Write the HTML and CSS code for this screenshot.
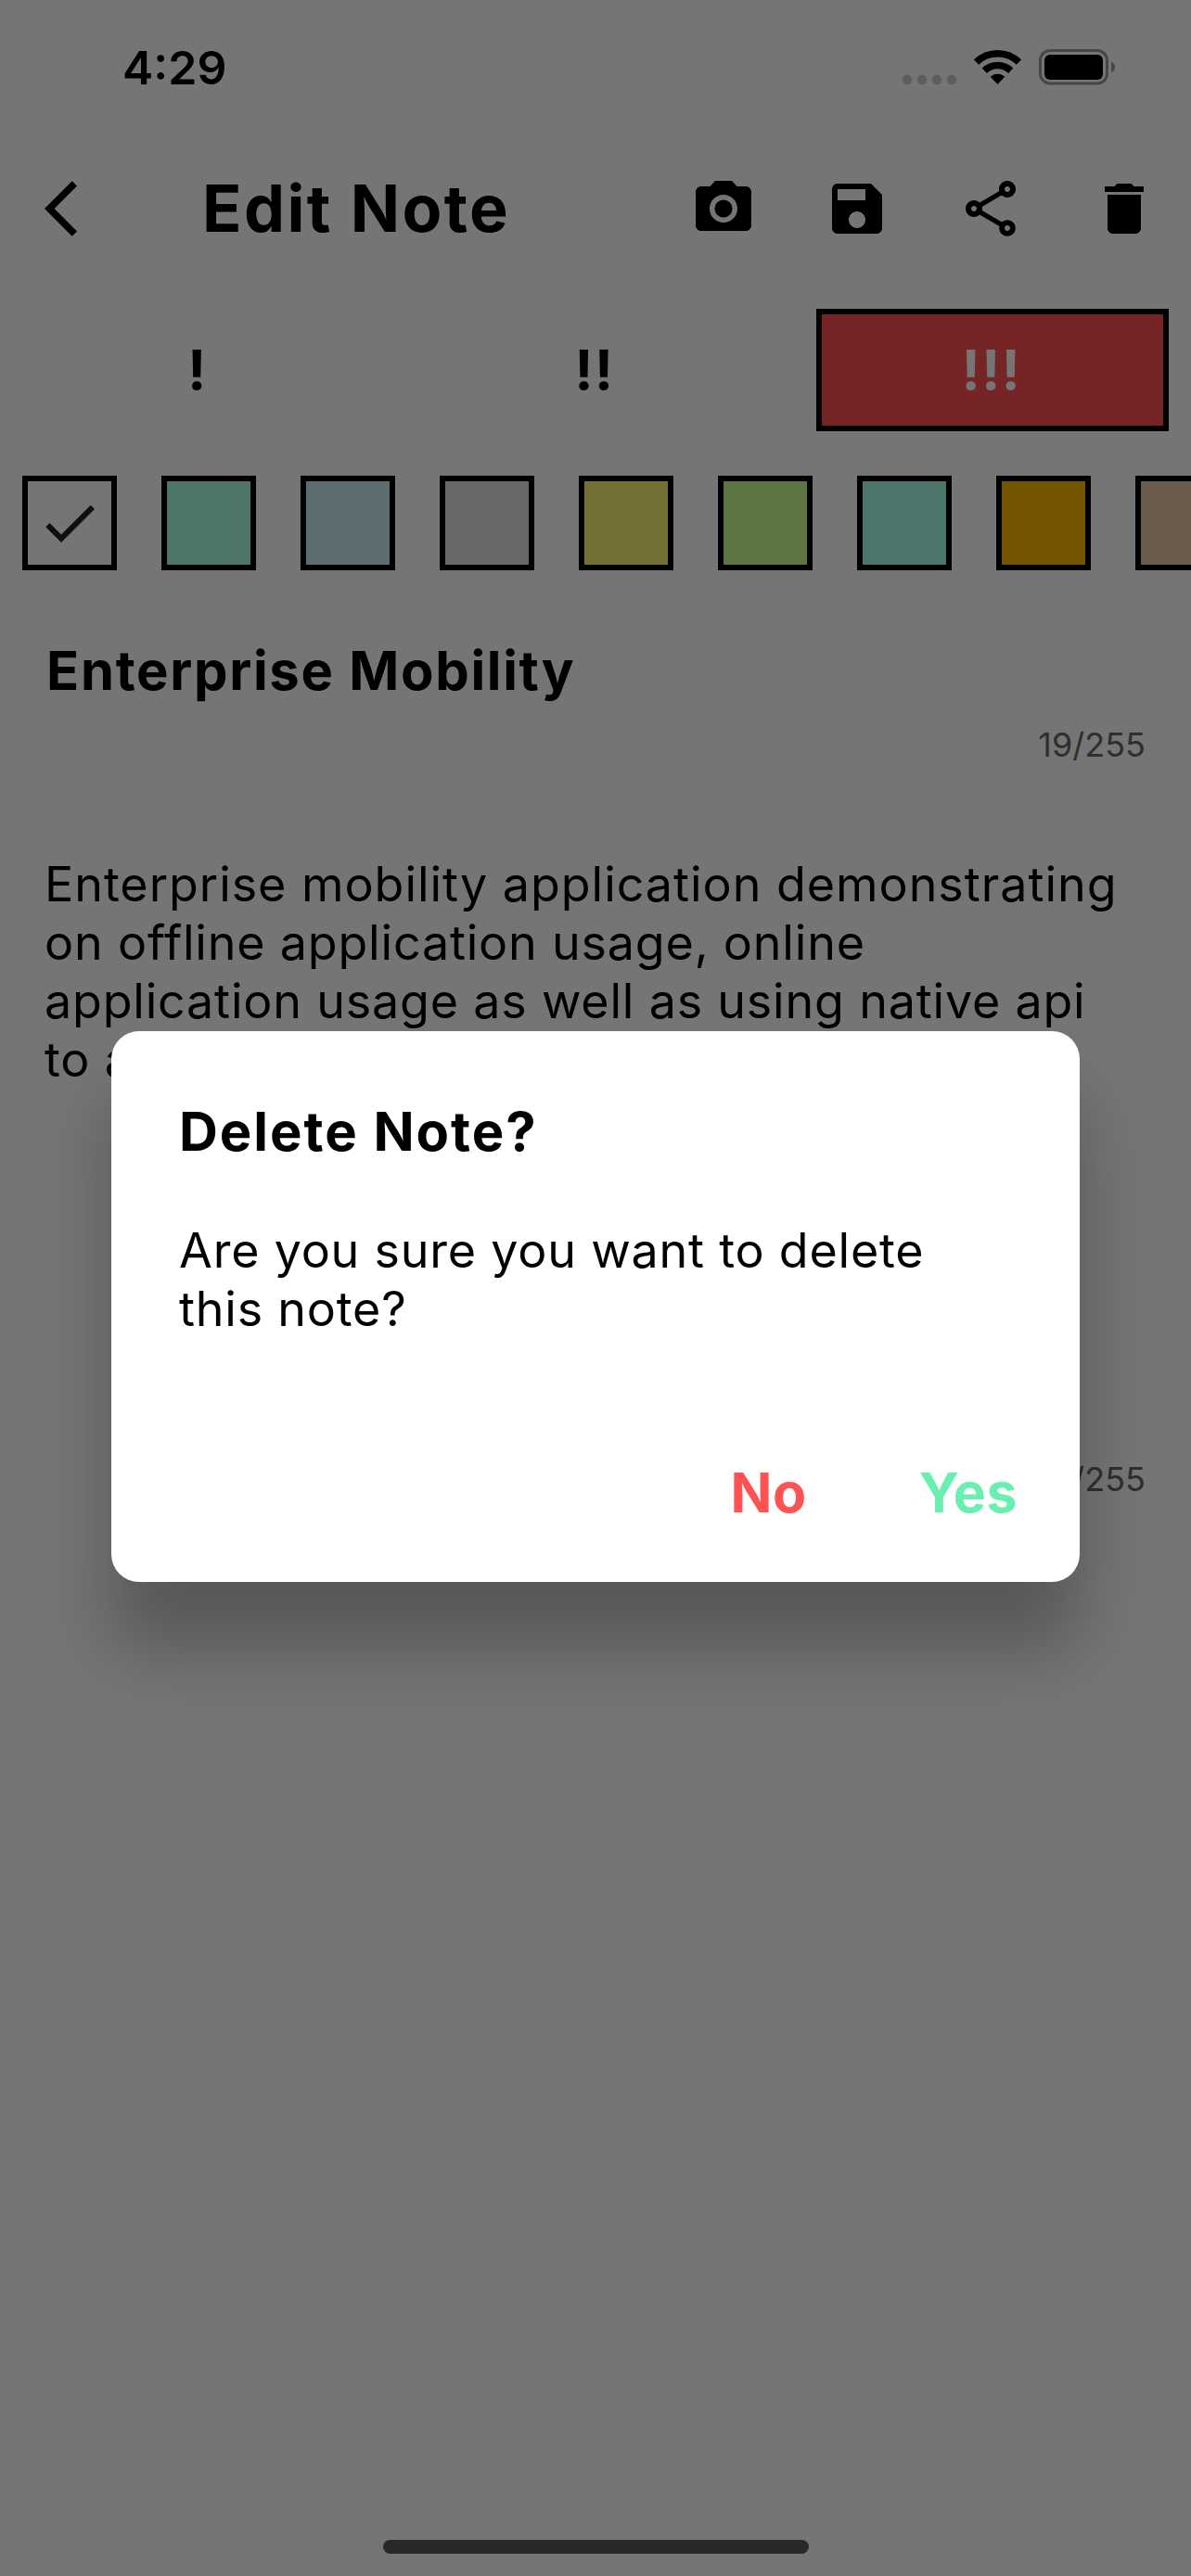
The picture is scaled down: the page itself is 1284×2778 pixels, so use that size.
FILE: index.html
```html
<!DOCTYPE html>
<html lang="en">
<head>
<meta charset="utf-8">
<title>Edit Note</title>
<link rel="stylesheet" href="styles.css">
</head>
<body>
<div class="screen">
  <header class="status">
    <span class="time">4:29</span>
    <svg class="indicators" width="228" height="48" viewBox="0 0 228 48" aria-hidden="true">
      <g fill="#ccc"><circle cx="8" cy="38" r="5.2"/><circle cx="24" cy="38" r="5.2"/><circle cx="40" cy="38" r="5.2"/><circle cx="56" cy="38" r="5.2"/></g>
      <g fill="none" stroke="#000" stroke-width="7.5">
        <path d="M82.5 19A33.2 33.2 0 0 1 128.5 19"/>
        <path d="M91.3 28.2A20.5 20.5 0 0 1 119.7 28.2"/>
      </g>
      <path d="M97.7 34.8A11.3 11.3 0 0 1 113.3 34.8L105.5 43z"/>
      <rect x="151.5" y="6.5" width="72" height="35.5" rx="10.5" fill="none" stroke="#9b9b9b" stroke-width="3"/>
      <rect x="156" y="11" width="63" height="27" rx="6"/>
      <path d="M228 18.5C230.8 19.8 232 22 232 24.4S230.8 29 228 30.3z" fill="#9b9b9b"/>
    </svg>
  </header>

  <nav class="appbar">
    <svg class="icon" viewBox="0 0 24 24"><path d="M11.67 3.87L9.9 2.1 0 12l9.9 9.9 1.77-1.77L3.54 12z"/></svg>
    <h1 class="heading">Edit Note</h1>
    <div class="tools">
      <svg class="icon" viewBox="0 0 24 24"><circle cx="12" cy="12" r="3.2"/><path d="M9 2L7.17 4H4c-1.1 0-2 .9-2 2v12c0 1.1.9 2 2 2h16c1.1 0 2-.9 2-2V6c0-1.1-.9-2-2-2h-3.17L15 2H9zm3 15c-2.76 0-5-2.24-5-5s2.24-5 5-5 5 2.24 5 5-2.24 5-5 5z"/></svg>
      <svg class="icon" viewBox="0 0 24 24"><path d="M17 3H5c-1.11 0-2 .9-2 2v14c0 1.1.89 2 2 2h14c1.1 0 2-.9 2-2V7l-4-4zm-5 16c-1.66 0-3-1.34-3-3s1.34-3 3-3 3 1.34 3 3-1.34 3-3 3zm3-10H5V5h10v4z"/></svg>
      <svg class="icon" viewBox="0 0 24 24"><path d="M18 16.08c-.76 0-1.44.3-1.96.77L8.91 12.7c.05-.23.09-.46.09-.7s-.04-.47-.09-.7l7.05-4.11c.54.5 1.25.81 2.04.81 1.66 0 3-1.34 3-3s-1.34-3-3-3-3 1.34-3 3c0 .24.04.47.09.7L8.04 9.81C7.5 9.31 6.79 9 6 9c-1.66 0-3 1.34-3 3s1.34 3 3 3c.79 0 1.5-.31 2.04-.81l7.12 4.16c-.05.21-.08.43-.08.65 0 1.61 1.31 2.92 2.92 2.92s2.92-1.31 2.92-2.92c0-1.61-1.31-2.92-2.92-2.92zM18 4c.55 0 1 .45 1 1s-.45 1-1 1-1-.45-1-1 .45-1 1-1zM6 13c-.55 0-1-.45-1-1s.45-1 1-1 1 .45 1 1-.45 1-1 1zm12 7.02c-.55 0-1-.45-1-1s.45-1 1-1 1 .45 1 1-.45 1-1 1z"/></svg>
      <svg class="icon" viewBox="0 0 24 24"><path d="M6 19c0 1.1.9 2 2 2h8c1.1 0 2-.9 2-2V7H6v12zM19 4h-3.5l-1-1h-5l-1 1H5v2h14V4z"/></svg>
    </div>
  </nav>

  <div class="priorities">
    <div class="priority">!</div>
    <div class="priority">!!</div>
    <div class="priority priority-high">!!!</div>
  </div>

  <div class="swatches">
    <div class="swatch white"><svg class="icon check" viewBox="0 0 24 24"><path d="M9 16.17L4.83 12l-1.42 1.41L9 19 21 7l-1.41-1.41z"/></svg></div>
    <div class="swatch mint"></div>
    <div class="swatch sky"></div>
    <div class="swatch silver"></div>
    <div class="swatch lemon"></div>
    <div class="swatch lime"></div>
    <div class="swatch aqua"></div>
    <div class="swatch amber"></div>
    <div class="swatch sand"></div>
  </div>

  <main class="note">
    <h2 class="note-title">Enterprise Mobility</h2>
    <div class="counter">19/255</div>
    <p class="note-body">Enterprise mobility application demonstrating<br><span class="snug">on offline application usage, online<br>application usage as well as using native api<br>to access</span></p>
    <div class="counter">144/255</div>
  </main>

  <div class="home-indicator"></div>

  <div class="scrim">
    <section class="dialog" role="dialog">
      <h2 class="dialog-title">Delete Note?</h2>
      <p class="dialog-text">Are you sure you want to delete<br>this note?</p>
      <div class="actions">
        <span class="action no">No</span>
        <span class="action yes">Yes</span>
      </div>
    </section>
  </div>
</div>
</body>
</html>
```
FILE: styles.css
```css
* { box-sizing: border-box; }

body {
  margin: 0;
  font-family: Inter, "Liberation Sans", sans-serif;
  color: #000;
}

h1, h2, p { margin: 0; }

.screen {
  position: relative;
  display: flex;
  flex-direction: column;
  width: 1284px;
  height: 2778px;
  background: #fff;
  overflow: hidden;
}

.status {
  display: flex;
  justify-content: space-between;
  height: 141px;
  padding: 48px 86px 0 132px;
}

.time {
  font-size: 50px;
  font-weight: 600;
  line-height: 50px;
}

.indicators { overflow: visible; }

.appbar {
  display: flex;
  align-items: center;
  height: 168px;
  padding: 0 36px 0 48px;
}

.icon {
  display: block;
  width: 72px;
  height: 72px;
  fill: #000;
}

.heading {
  margin-left: 98px;
  font-size: 70px;
  font-weight: 700;
  letter-spacing: 2.37px;
  line-height: 84px;
}

.tools {
  display: flex;
  gap: 72px;
  margin-left: auto;
}

.priorities {
  display: grid;
  grid-template-columns: repeat(3, 1fr);
  gap: 48px;
  padding: 24px;
}

.priority {
  display: flex;
  align-items: center;
  justify-content: center;
  height: 132px;
  padding: 0 2px 2px 0;
  font-size: 59px;
  font-weight: 700;
  letter-spacing: 1.6px;
}

.priority-high {
  border: 6px solid #000;
  background: #ff5252;
  color: #fff;
}

.swatches {
  display: flex;
  gap: 48px;
  padding: 24px 0 24px 24px;
  overflow: hidden;
}

.swatch {
  display: flex;
  align-items: center;
  justify-content: center;
  flex: none;
  width: 102px;
  height: 102px;
  border: 6px solid #000;
}

.check { fill: #222; }

.white { background: #fff; }
.mint { background: #a9ffe8; }
.sky { background: #caf0f8; }
.silver { background: #e5e5ea; }
.lemon { background: #fff476; }
.lime { background: #cbff90; }
.aqua { background: #a7feea; }
.amber { background: #ffb700; }
.sand { background: #e6c9a9; }

.note { padding: 48px; }

.note-title {
  padding-left: 2px;
  font-size: 58px;
  font-weight: 700;
  letter-spacing: 1.68px;
  line-height: 72px;
}

.counter {
  margin-top: 22px;
  padding-right: 1px;
  font-size: 36px;
  line-height: 44px;
  text-align: right;
  color: #666;
}

.note-body {
  height: 554px;
  margin-top: 97px;
  margin-bottom: 97px;
  font-size: 52px;
  letter-spacing: 0.96px;
  line-height: 63px;
}

.snug { letter-spacing: 0.8px; }

.home-indicator {
  width: 459px;
  height: 15px;
  margin: auto auto 24px;
  border-radius: 8px;
  background: #595959;
}

.scrim {
  position: absolute;
  inset: 0;
  display: flex;
  align-items: center;
  justify-content: center;
  padding: 141px 120px 102px;
  background: rgba(0, 0, 0, 0.54);
}

.dialog {
  display: flex;
  flex-direction: column;
  width: 1044px;
  height: 594px;
  padding: 72px 67px 36px 73px;
  border-radius: 30px;
  background: #fff;
  box-shadow: 0 72px 76px rgba(0, 0, 0, 0.25);
}

.dialog-title {
  font-size: 58px;
  font-weight: 700;
  letter-spacing: 1.96px;
  line-height: 72px;
}

.dialog-text {
  margin-top: 61px;
  font-size: 52px;
  letter-spacing: 0.78px;
  line-height: 63px;
}

.actions {
  display: flex;
  align-items: center;
  justify-content: flex-end;
  gap: 121px;
  height: 120px;
  margin-top: auto;
}

.action {
  font-size: 59px;
  font-weight: 700;
  letter-spacing: 0.5px;
}

.no { color: #ff5252; }
.yes { color: #69f0ae; }
```
